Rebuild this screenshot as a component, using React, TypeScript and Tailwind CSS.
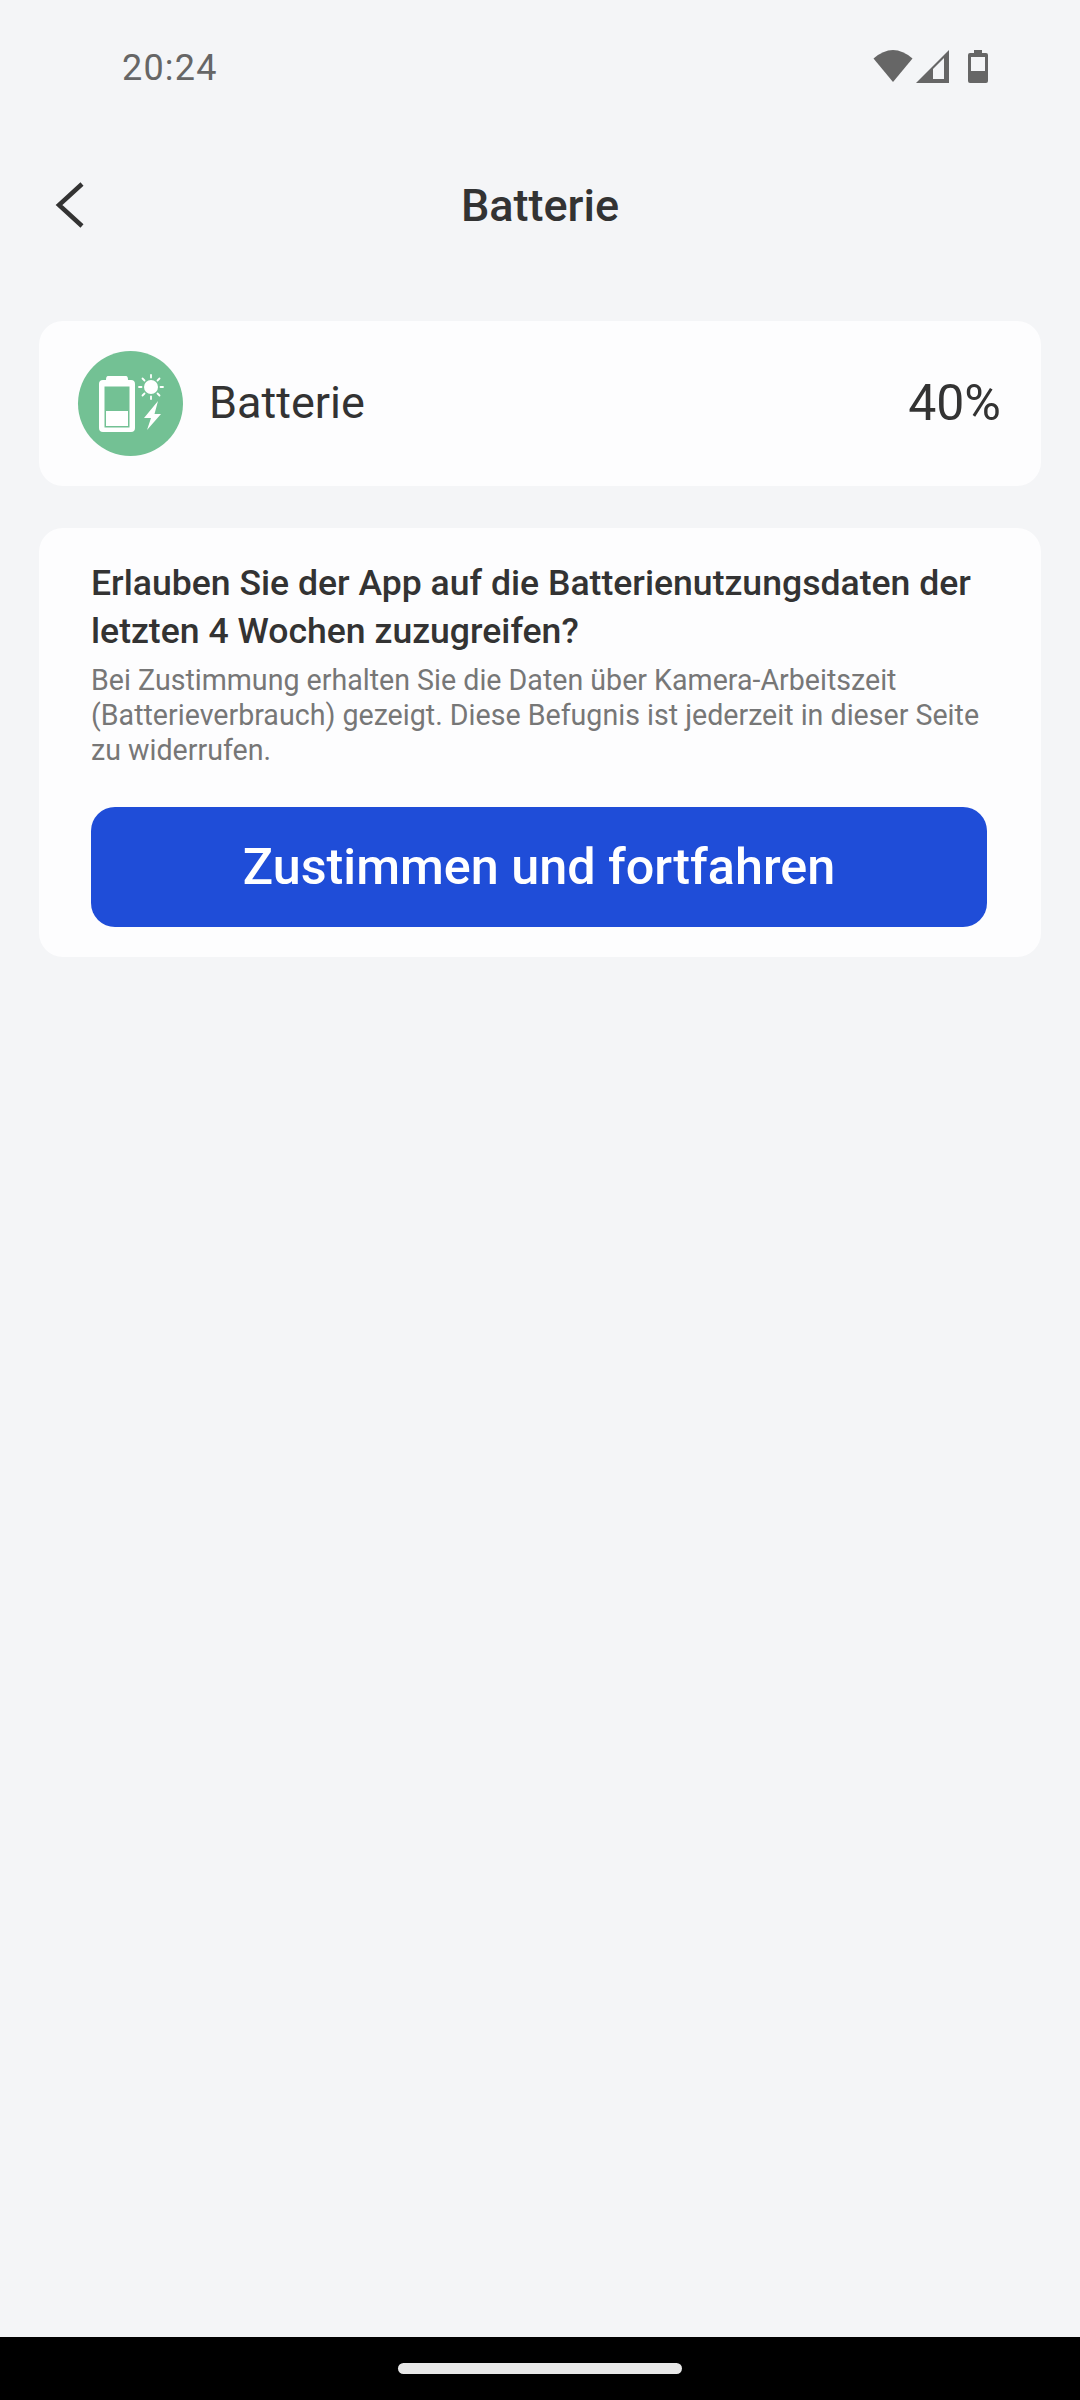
import React from 'react'

const roboto = "font-['Roboto',sans-serif]"

// Status bar glyphs
const StatusIcons = () => (
  <div className="flex items-center">
    <svg width="40" height="33" viewBox="0 0 40 33" className="mr-[3px]">
      <path d="M0.5 8.5 Q20 -8.5 39.5 8.5 L20 32 Z" fill="#666666" />
    </svg>
    <svg width="33" height="33" viewBox="0 0 33 33">
      <path d="M33 0 V33 H0 Z" fill="#666666" />
      <path d="M17 19 L28 8 V29 H17 Z" fill="#f4f5f7" />
    </svg>
    <svg width="20" height="33" viewBox="0 0 20 33" className="ml-[19px]">
      <path d="M6 0 H14 V3 H18 Q20 3 20 5 V31 Q20 33 18 33 H2 Q0 33 0 31 V5 Q0 3 2 3 H6 Z" fill="#666666" />
      <rect x="3" y="7" width="14" height="14" fill="#f4f5f7" />
    </svg>
  </div>
)

const BatteryBadge = () => (
  <div className="w-[105px] h-[105px] rounded-full bg-[#73c194] shrink-0">
    <svg width="105" height="105" viewBox="0 0 105 105">
      <path d="M30 25 H48 Q50 25 50 29 H53 Q57 29 57 33 V77 Q57 81 53 81 H25 Q21 81 21 77 V33 Q21 29 25 29 H28 Q28 25 30 25 Z" fill="#ffffff" />
      <rect x="26.5" y="35.5" width="25" height="41" fill="#73c194" />
      <rect x="28" y="60" width="22" height="15" fill="#ffffff" />
      <circle cx="73" cy="36" r="7" fill="#ffffff" />
      <g stroke="#ffffff" strokeWidth="1.8" strokeLinecap="round">
        <path d="M73 24 V26.5" />
        <path d="M73 45.5 V48" />
        <path d="M61 36 H63.5" />
        <path d="M82.5 36 H85" />
        <path d="M64.5 27.5 L66.5 29.5" />
        <path d="M79.5 42.5 L81.5 44.5" />
        <path d="M64.5 44.5 L66.5 42.5" />
        <path d="M79.5 29.5 L81.5 27.5" />
      </g>
      <path d="M80 50 L66 67 H73 L69 79 L83 63 H76.5 Z" fill="#ffffff" />
    </svg>
  </div>
)

export default function App() {
  return (
    <div className={`w-[1080px] h-[2400px] bg-[#f4f5f7] flex flex-col ${roboto}`}>
      {/* Status bar */}
      <div className="h-[132px] flex items-center justify-between pl-[122px] pr-[92px]">
        <span className="text-[36px] leading-none text-[#666666] tracking-[1.2px] pt-[3px]">20:24</span>
        <StatusIcons />
      </div>

      {/* Header */}
      <div className="relative h-[146px] flex items-center justify-center">
        <svg width="34" height="48" viewBox="0 0 34 48" className="absolute left-[52px] top-[49px]">
          <path d="M30 3 L7 24 L30 45" fill="none" stroke="#333333" strokeWidth="4.5" />
        </svg>
        <h1 className="text-[45px] leading-none font-medium text-[#333333]">Batterie</h1>
      </div>

      {/* Battery level */}
      <div className="mt-[43px] mx-[39px] h-[165px] rounded-[24px] bg-[#fdfdfe] flex items-center pl-[39px] pr-[40px]">
        <BatteryBadge />
        <span className="ml-[26px] text-[45px] leading-none text-[#333333] pb-[2px]">Batterie</span>
        <span className="ml-auto text-[50px] leading-none text-[#333333] pb-[2px]">40%</span>
      </div>

      {/* Consent card */}
      <div className="mt-[42px] mx-[39px] h-[429px] rounded-[24px] bg-[#fdfdfe] pt-[31px] px-[52px]">
        <h2 className="text-[35.6px] leading-[48px] font-medium text-[#333333] whitespace-nowrap">
          Erlauben Sie der App auf die Batterienutzungsdaten der
          <br />
          letzten 4 Wochen zuzugreifen?
        </h2>
        <p className="mt-[8px] text-[28.6px] leading-[35px] text-[#777777] whitespace-nowrap">
          Bei Zustimmung erhalten Sie die Daten über Kamera-Arbeitszeit
          <br />
          (Batterieverbrauch) gezeigt. Diese Befugnis ist jederzeit in dieser Seite
          <br />
          zu widerrufen.
        </p>
        <button className="mt-[39px] w-[896px] h-[120px] rounded-[24px] bg-[#1f4dd8] text-white text-[50.3px] font-medium leading-none flex items-center justify-center">
          Zustimmen und fortfahren
        </button>
      </div>

      {/* Navigation bar */}
      <div className="mt-auto h-[63px] bg-black flex justify-center pt-[26px]">
        <div className="w-[284px] h-[11px] rounded-full bg-[#e8e8e8]" />
      </div>
    </div>
  )
}
